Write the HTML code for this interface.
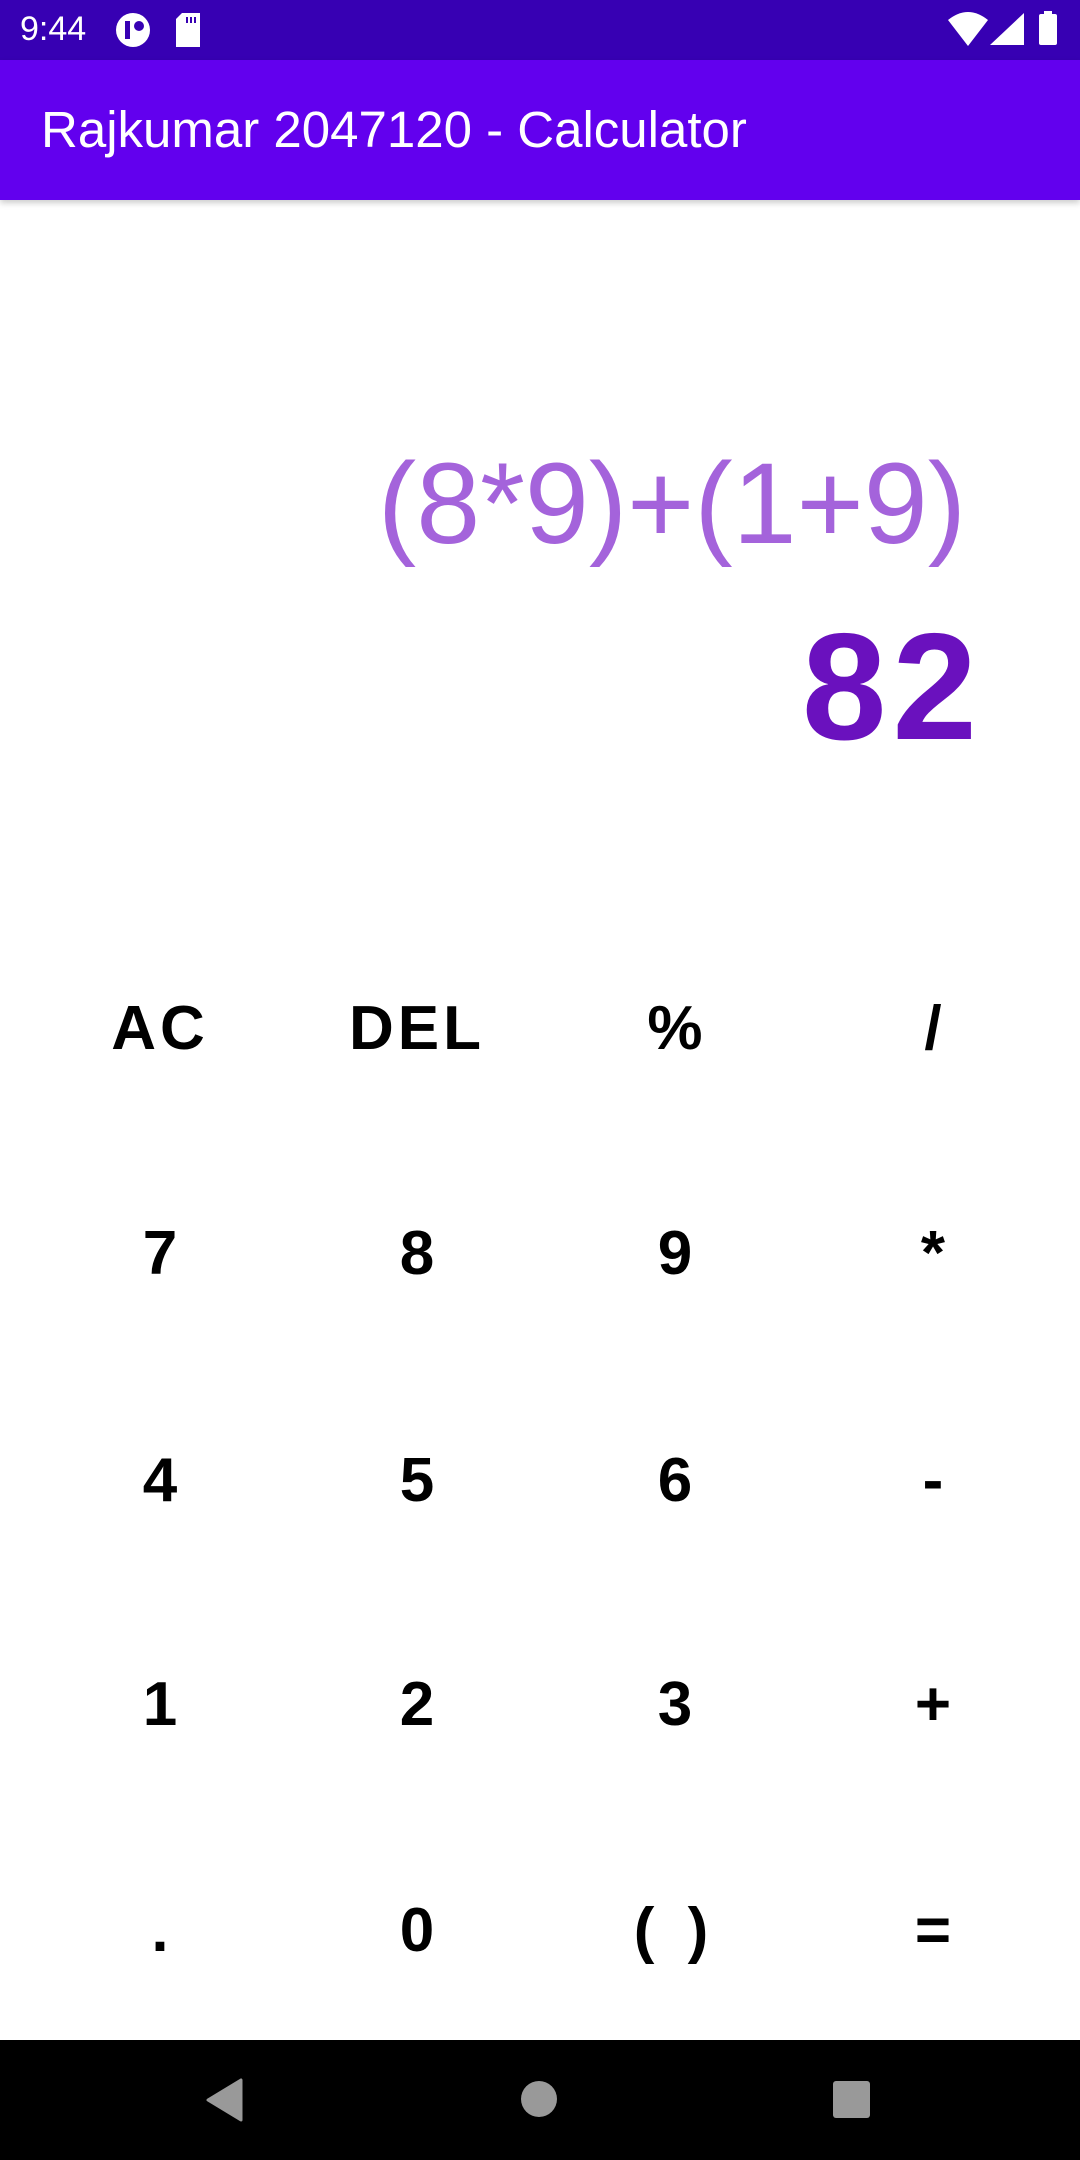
<!DOCTYPE html>
<html><head><meta charset="utf-8"><style>
*{margin:0;padding:0;box-sizing:border-box}
body{width:1080px;height:2160px;position:relative;background:#fff;font-family:"Liberation Sans",sans-serif;overflow:hidden}
.sb{position:absolute;left:0;top:0;width:1080px;height:60px;background:#3700B3}
.ab{position:absolute;left:0;top:60px;width:1080px;height:140px;background:#6200EE;box-shadow:0 3px 6px rgba(0,0,0,.2)}
.title{position:absolute;left:41px;top:44px;color:#fff;font-size:51px;font-weight:500;line-height:1;white-space:nowrap}
.time{position:absolute;left:20px;top:12px;color:#fff;font-size:34px;line-height:1}
.expr{position:absolute;right:114px;top:435px;color:#A463DB;font-size:115px;line-height:1.2;white-space:nowrap}
.res{position:absolute;right:97px;top:596px;color:#6A11BE;font-size:152px;font-weight:bold;line-height:1.2;white-space:nowrap;letter-spacing:6px}
.k{position:absolute;width:200px;margin-left:-100px;text-align:center;font-weight:bold;font-size:62px;line-height:1;color:#000}
.nav{position:absolute;left:0;top:2040px;width:1080px;height:120px;background:#000}
</style></head><body>
<div class="sb">
<div class="time">9:44</div>
<svg style="position:absolute;left:115px;top:12px" width="40" height="36" viewBox="0 0 40 36"><circle cx="18" cy="18" r="17" fill="#fff"/><rect x="10" y="9" width="5" height="18" fill="#3700B3"/><circle cx="24" cy="14" r="5" fill="#3700B3"/></svg>
<svg style="position:absolute;left:174px;top:13px" width="28" height="34" viewBox="0 0 28 34"><path d="M8 0H26V34H2V6Z" fill="#fff"/><rect x="12" y="4" width="2" height="6" fill="#3700B3"/><rect x="16" y="4" width="2" height="6" fill="#3700B3"/><rect x="20" y="4" width="2" height="6" fill="#3700B3"/></svg>
<svg style="position:absolute;left:948px;top:12px" width="40" height="34" viewBox="0 0 40 34"><path d="M0 8Q20 -8 40 8L20 34Z" fill="#fff"/></svg>
<svg style="position:absolute;left:990px;top:13px" width="34" height="32" viewBox="0 0 34 32"><path d="M34 0V32H0Z" fill="#fff"/></svg>
<div style="position:absolute;left:1039px;top:14px;width:18px;height:31px;background:#fff;border-radius:2px"></div>
<div style="position:absolute;left:1044px;top:11px;width:8px;height:4px;background:#fff"></div>
</div>
<div class="ab"><div class="title">Rajkumar 2047120 - Calculator</div></div>
<div class="expr">(8*9)+(1+9)</div>
<div class="res">82</div>

<div class="k" style="left:160px;top:998px;letter-spacing:4px">AC</div>
<div class="k" style="left:417px;top:998px;letter-spacing:4px">DEL</div>
<div class="k" style="left:675px;top:998px">%</div>
<div class="k" style="left:933px;top:998px">/</div>

<div class="k" style="left:160px;top:1223px">7</div>
<div class="k" style="left:417px;top:1223px">8</div>
<div class="k" style="left:675px;top:1223px">9</div>
<div class="k" style="left:933px;top:1223px">*</div>

<div class="k" style="left:160px;top:1450px">4</div>
<div class="k" style="left:417px;top:1450px">5</div>
<div class="k" style="left:675px;top:1450px">6</div>
<div class="k" style="left:933px;top:1450px">-</div>

<div class="k" style="left:160px;top:1674px">1</div>
<div class="k" style="left:417px;top:1674px">2</div>
<div class="k" style="left:675px;top:1674px">3</div>
<div class="k" style="left:933px;top:1674px">+</div>

<div class="k" style="left:160px;top:1900px">.</div>
<div class="k" style="left:417px;top:1900px">0</div>
<div class="k" style="left:675px;top:1900px;letter-spacing:8px">( )</div>
<div class="k" style="left:933px;top:1900px">=</div>

<div class="nav">
<svg style="position:absolute;left:205px;top:38px" width="40" height="44" viewBox="0 0 40 44"><path d="M36 2V42L3 22Z" fill="#999" stroke="#999" stroke-width="3" stroke-linejoin="round"/></svg>
<div style="position:absolute;left:521px;top:41px;width:36px;height:36px;border-radius:50%;background:#999"></div>
<div style="position:absolute;left:833px;top:41px;width:37px;height:37px;border-radius:3px;background:#999"></div>
</div>
</body></html>
